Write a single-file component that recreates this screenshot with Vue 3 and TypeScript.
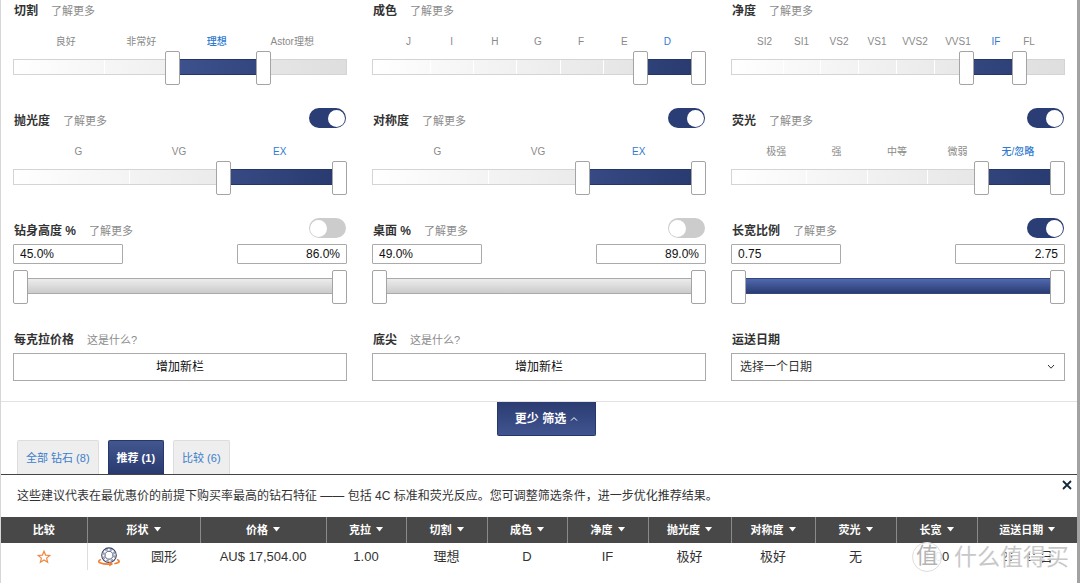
<script setup lang="ts">
import { reactive, ref } from 'vue'

interface Filter {
  id: string
  title: string
  link: string
  kind: 'steps' | 'range' | 'add' | 'date'
  labels?: string[]
  weights?: number[]
  active?: number
  low?: number
  high?: number
  from?: string
  to?: string
  toggle?: boolean
  on?: boolean
}

const more = '了解更多'
const what = '这是什么?'

const filters = reactive<Filter[]>([
  { id: 'cut', title: '切割', link: more, kind: 'steps', labels: ['良好', '非常好', '理想', 'Astor理想'], active: 2, low: 476, high: 762 },
  { id: 'color', title: '成色', link: more, kind: 'steps', labels: ['J', 'I', 'H', 'G', 'F', 'E', 'D'], active: 6, low: 818, high: 1000 },
  { id: 'clarity', title: '净度', link: more, kind: 'steps', labels: ['SI2', 'SI1', 'VS2', 'VS1', 'VVS2', 'VVS1', 'IF', 'FL'], weights: [37, 37, 38, 38, 38, 48, 28, 38], active: 6, low: 715, high: 880 },
  { id: 'polish', title: '抛光度', link: more, kind: 'steps', labels: ['G', 'VG', 'EX'], active: 2, low: 636, high: 1000, toggle: true, on: true },
  { id: 'symmetry', title: '对称度', link: more, kind: 'steps', labels: ['G', 'VG', 'EX'], active: 2, low: 636, high: 1000, toggle: true, on: true },
  { id: 'fluor', title: '荧光', link: more, kind: 'steps', labels: ['极强', '强', '中等', '微弱', '无/忽略'], active: 4, low: 763, high: 1000, toggle: true, on: true },
  { id: 'depth', title: '钻身高度 %', link: more, kind: 'range', from: '45.0%', to: '86.0%', low: 0, high: 1000, toggle: true, on: false },
  { id: 'table', title: '桌面 %', link: more, kind: 'range', from: '49.0%', to: '89.0%', low: 0, high: 1000, toggle: true, on: false },
  { id: 'ratio', title: '长宽比例', link: more, kind: 'range', from: '0.75', to: '2.75', low: 0, high: 1000, toggle: true, on: true },
  { id: 'carat-price', title: '每克拉价格', link: what, kind: 'add' },
  { id: 'culet', title: '底尖', link: what, kind: 'add' },
  { id: 'delivery', title: '运送日期', link: '', kind: 'date' },
])

const columnsOf = (f: Filter) => ({
  gridTemplateColumns: f.labels!.map((_, i) => `minmax(0, ${f.weights ? f.weights[i] : 1}fr)`).join(' '),
})
const edge = (v: number) => `calc(7px + (100% - 15px) * ${v / 1000})`
const fillClip = (f: Filter) => ({
  clipPath: `inset(0 ${edge(1000 - f.high!)} 0 ${edge(f.low!)})`,
})

const tabs = ['全部 钻石 (8)', '推荐 (1)', '比较 (6)']
const activeTab = ref(1)

const columns = [
  { name: '比较', width: 86 },
  { name: '形状', width: 113 },
  { name: '价格', width: 126 },
  { name: '克拉', width: 80 },
  { name: '切割', width: 81 },
  { name: '成色', width: 80 },
  { name: '净度', width: 81 },
  { name: '抛光度', width: 83 },
  { name: '对称度', width: 84 },
  { name: '荧光', width: 81 },
  { name: '长宽', width: 81 },
  { name: '运送日期', width: 100 },
]
const total = columns.reduce((s, c) => s + c.width, 0)
const values = ['AU$ 17,504.00', '1.00', '理想', 'D', 'IF', '极好', '极好', '无', '1.00', '2月 15日']
</script>

<template>
  <main class="page">
    <section class="filters">
      <div v-for="f in filters" :key="f.id" class="filter">
        <header class="head">
          <label v-if="f.kind === 'date'" class="title" :for="f.id">{{ f.title }}</label>
          <span v-else :id="f.id + '-title'" class="title">{{ f.title }}</span>
          <a v-if="f.link" class="more" href="#">{{ f.link }}</a>
          <input v-if="f.toggle" v-model="f.on" class="toggle" type="checkbox" role="switch" :aria-label="f.title" />
        </header>

        <div v-if="f.kind === 'steps'" class="labels" :style="columnsOf(f)">
          <span v-for="(l, i) in f.labels" :key="l" :class="{ active: i === f.active }">{{ l }}</span>
        </div>
        <div v-if="f.kind === 'range'" class="bounds">
          <input v-model="f.from" class="bound" type="text" :aria-label="f.title + ' 最小'" />
          <input v-model="f.to" class="bound end" type="text" :aria-label="f.title + ' 最大'" />
        </div>

        <div v-if="f.kind === 'steps' || f.kind === 'range'" class="slider" :class="[f.kind, { on: f.on }]">
          <div class="track">
            <div v-if="f.labels" class="ticks" :style="columnsOf(f)">
              <i v-for="l in f.labels" :key="l"></i>
            </div>
          </div>
          <div class="fill" :style="fillClip(f)"></div>
          <input v-model.number="f.low" type="range" min="0" max="1000" :aria-label="f.title + ' 下限'" />
          <input v-model.number="f.high" type="range" min="0" max="1000" :aria-label="f.title + ' 上限'" />
        </div>

        <button v-if="f.kind === 'add'" class="box add" type="button" :aria-describedby="f.id + '-title'">增加新栏</button>
        <div v-if="f.kind === 'date'" class="date">
          <select :id="f.id" class="box">
            <option>选择一个日期</option>
          </select>
          <svg class="chevron" viewBox="0 0 8 6" aria-hidden="true"><path d="M1 1l3 3.2L7 1" /></svg>
        </div>
      </div>
    </section>

    <div class="fewer-bar">
      <button class="fewer" type="button">
        更少 筛选
        <svg viewBox="0 0 8 6" aria-hidden="true"><path d="M1 4.6l3-3 3 3" /></svg>
      </button>
    </div>

    <nav class="tabs">
      <button
        v-for="(t, i) in tabs"
        :key="t"
        type="button"
        class="tab"
        :class="{ selected: i === activeTab }"
        @click="activeTab = i"
      >{{ t }}</button>
    </nav>

    <div class="notice">
      <p>这些建议代表在最优惠价的前提下购买率最高的钻石特征 —— 包括 4C 标准和荧光反应。您可调整筛选条件，进一步优化推荐结果。</p>
      <button class="close" type="button" aria-label="关闭">
        <svg viewBox="0 0 10 10" aria-hidden="true"><path d="M1 1l8 8M9 1L1 9" /></svg>
      </button>
    </div>

    <div class="results">
      <table>
        <colgroup>
          <col v-for="c in columns" :key="c.name" :style="{ width: (c.width / total) * 100 + '%' }" />
        </colgroup>
        <thead>
          <tr>
            <th v-for="(c, i) in columns" :key="c.name" scope="col">
              {{ c.name }}<svg v-if="i" class="sort" viewBox="0 0 7 5" aria-hidden="true"><path d="M0 0h7L3.5 4.6z" /></svg>
            </th>
          </tr>
        </thead>
        <tbody>
          <tr>
            <td class="compare">
              <button type="button" class="star" aria-label="比较">
                <svg viewBox="0 0 14 14" aria-hidden="true">
                  <path d="M7 1.200L8.600 5.100l4.200.3-3.200 2.700 1 4.100L7 10l-3.600 2.200 1-4.100-3.200-2.700 4.200-.3z" />
                </svg>
              </button>
            </td>
            <td>
              <div class="shape">
                <svg class="gem" viewBox="0 0 22 20" aria-hidden="true">
                  <g fill="none" stroke="#3a4468">
                    <circle cx="11" cy="8.200" r="7.300" stroke-width="1.100" />
                    <circle cx="11" cy="8.200" r="5.700" stroke-width="1.700" stroke-dasharray="2.500 1.980" opacity=".5" />
                    <path d="M9.400 4.300h3.200l2.300 2.300v3.200l-2.300 2.300H9.400L7.100 9.800V6.600z" stroke-width=".9" />
                  </g>
                  <path d="M3 12.600C.2 13.600-.1 15 2.500 16c2.300.9 5.800 1.200 9 1.100M19 12.600c2.600.9 2.900 2.200.7 3.200-1 .4-2.200.7-3.400.9" fill="none" stroke="#ef7d2e" stroke-width="1.600" />
                  <path d="M11.200 14.400l4 2.700-4 2.500z" fill="#ef7d2e" />
                </svg>
                <span>圆形</span>
              </div>
            </td>
            <td v-for="(v, i) in values" :key="i">{{ v }}</td>
          </tr>
        </tbody>
      </table>
      <div class="mark" aria-hidden="true">
        <span class="seal">值</span>
        <span class="brand">什么值得买</span>
      </div>
    </div>
  </main>
</template>

<style>
body {
  margin: 0;
  background: #fff;
}
</style>

<style scoped>
* {
  box-sizing: border-box;
}

.page {
  min-height: 100vh;
  overflow: hidden;
  border-left: 1px solid #d6d6d6;
  border-right: 3px solid #a2a2a2;
  background: #fff;
  color: #333;
  font: 12px/20px "Liberation Sans", "Noto Sans CJK SC", sans-serif;
}

button,
input,
select {
  margin: 0;
  padding: 0;
  font: inherit;
  color: inherit;
}

button {
  cursor: pointer;
}

.filters {
  display: grid;
  grid-template-columns: repeat(3, minmax(0, 1fr));
  gap: 26px 25px;
  padding: 0 12px 20px;
}

.head {
  display: flex;
  align-items: center;
  height: 20px;
  padding-top: 2px;
  gap: 13px;
}

.title {
  padding-left: 1px;
  font-weight: 700;
}

.more {
  color: #8c8c8c;
  font-size: 11px;
  text-decoration: none;
}

.toggle {
  appearance: none;
  flex: none;
  display: flex;
  align-items: center;
  align-self: flex-start;
  width: 37px;
  height: 20px;
  margin: -4px 1px 0 auto;
  padding: 0 1px;
  border-radius: 10px;
  background: #ccc;
}

.toggle::before {
  content: "";
  width: 17px;
  height: 17px;
  border-radius: 50%;
  background: #fff;
}

.toggle:checked {
  justify-content: flex-end;
  background: #2a3d74;
}

.labels {
  display: grid;
  margin: 11px 17px 0 15px;
  height: 20px;
  padding-top: 1px;
  color: #8a8a8a;
  font-size: 10px;
  white-space: nowrap;
}

.labels span {
  display: flex;
  justify-content: center;
}

.labels .active {
  color: #2f7bd0;
  font-weight: 500;
}

.bounds {
  display: flex;
  justify-content: space-between;
  margin: 4px 0 6px;
}

.bound {
  width: 33%;
  height: 20px;
  padding: 0 6px;
  border: 1px solid #aaa;
  border-radius: 1px;
  background: #fff;
  color: #111;
}

.end {
  text-align: right;
}

.slider {
  position: relative;
  height: 33px;
  padding-top: 8px;
}

.track {
  height: 16px;
  border: 1px solid #d4d4d4;
  background: linear-gradient(90deg, #fff, #dedede);
}

.ticks {
  display: grid;
  height: 100%;
  margin: 0 15px;
}

.ticks i {
  border-right: 1px solid #fff;
}

.ticks i:last-child {
  border: 0;
}

.fill {
  position: absolute;
  top: 8px;
  left: 0;
  right: 0;
  height: 16px;
  border: solid #24356a;
  border-width: 1px 0;
  background: linear-gradient(90deg, #5369ae, #27396d);
}

.range .fill {
  border-color: #aaa;
  background: linear-gradient(#ececec, #cbcbcb);
}

.range.on .fill {
  border-color: #33457e;
  background: linear-gradient(#5068ae, #2a3c72);
}

.slider input {
  appearance: none;
  position: absolute;
  top: 0;
  left: 0;
  width: 100%;
  height: 34px;
  background: none;
  pointer-events: none;
}

.slider input::-webkit-slider-thumb {
  appearance: none;
  width: 15px;
  height: 34px;
  border: 1px solid #a4a4a4;
  border-radius: 2px;
  background: #fff;
  pointer-events: auto;
}

.box {
  display: block;
  width: 100%;
  height: 28px;
  margin-top: 4px;
  border: 1px solid #aaa;
  border-radius: 0;
  background: #fff;
}

.add {
  color: #111;
}

.date {
  position: relative;
}

.date .box {
  appearance: none;
  padding: 0 8px;
}

.chevron {
  position: absolute;
  top: 11px;
  right: 10px;
  width: 8px;
  height: 6px;
  pointer-events: none;
}

.chevron path,
.fewer path {
  fill: none;
  stroke: currentColor;
}

.fewer-bar {
  display: flex;
  justify-content: center;
  height: 39px;
  padding-left: 15px;
  border-top: 1px solid #e2e2e2;
}

.fewer {
  display: flex;
  align-items: center;
  justify-content: center;
  gap: 4px;
  width: 99px;
  height: 34px;
  border: 1px solid #26376a;
  border-top: 0;
  border-radius: 0 0 2px 2px;
  background: linear-gradient(#2b3c72, #41548f);
  color: #fff;
  font-weight: 700;
}

.fewer svg {
  width: 8px;
  height: 6px;
}

.tabs {
  display: flex;
  gap: 9px;
  padding-left: 16px;
  border-bottom: 1px solid #444;
}

.tab {
  height: 34px;
  padding: 0 8px;
  border: 1px solid #ddd;
  border-bottom: 0;
  border-radius: 2px 2px 0 0;
  background: #eee;
  color: #3c7dca;
  font-size: 11px;
}

.tab.selected {
  border-color: #26376a;
  background: linear-gradient(#43568f, #283a6e);
  color: #fff;
  font-weight: 700;
}

.notice {
  display: flex;
  align-items: flex-start;
  justify-content: space-between;
  height: 42px;
  padding: 0 5px 0 16px;
}

.notice p {
  margin: 11px 0 0;
}

.close {
  display: flex;
  margin-top: 5px;
  border: 0;
  background: none;
}

.close svg {
  width: 10px;
  height: 10px;
}

.close path {
  fill: none;
  stroke: #12283c;
  stroke-width: 1.8;
}

.results {
  position: relative;
}

table {
  width: 100%;
  border-collapse: collapse;
  table-layout: fixed;
}

th {
  height: 26px;
  padding: 0;
  border-right: 1px solid #8a8a8a;
  background: #484848;
  color: #fff;
  font-size: 11px;
}

th:last-child {
  border-right: 0;
}

.sort {
  width: 7px;
  height: 5px;
  margin-left: 5px;
  vertical-align: 2px;
  fill: #fff;
}

td {
  height: 27px;
  padding: 0;
  font-size: 13px;
  text-align: center;
}

.compare {
  border-right: 1px solid #ddd;
}

.star {
  display: inline-flex;
  vertical-align: middle;
  border: 0;
  background: none;
}

.star svg {
  width: 14px;
  height: 14px;
  fill: none;
  stroke: #ee8742;
  stroke-width: 1.2;
}

.shape {
  display: flex;
  align-items: center;
  justify-content: space-between;
  padding: 0 23px 0 10px;
}

.gem {
  width: 22px;
  height: 20px;
}

.mark {
  position: absolute;
  right: 8px;
  bottom: -2px;
  display: flex;
  align-items: center;
  gap: 12px;
  color: #c8c8c8;
  line-height: 30px;
  pointer-events: none;
}

.seal {
  width: 30px;
  height: 30px;
  border: 1px solid #ddd;
  border-radius: 50%;
  background: rgba(255, 255, 255, 0.9);
  color: #b4b4b4;
  font-size: 22px;
  line-height: 26px;
  text-align: center;
}

.brand {
  font-size: 23px;
  text-shadow: -1px -1px 0 #fff, -2px -1px 0 #fff;
}
</style>
